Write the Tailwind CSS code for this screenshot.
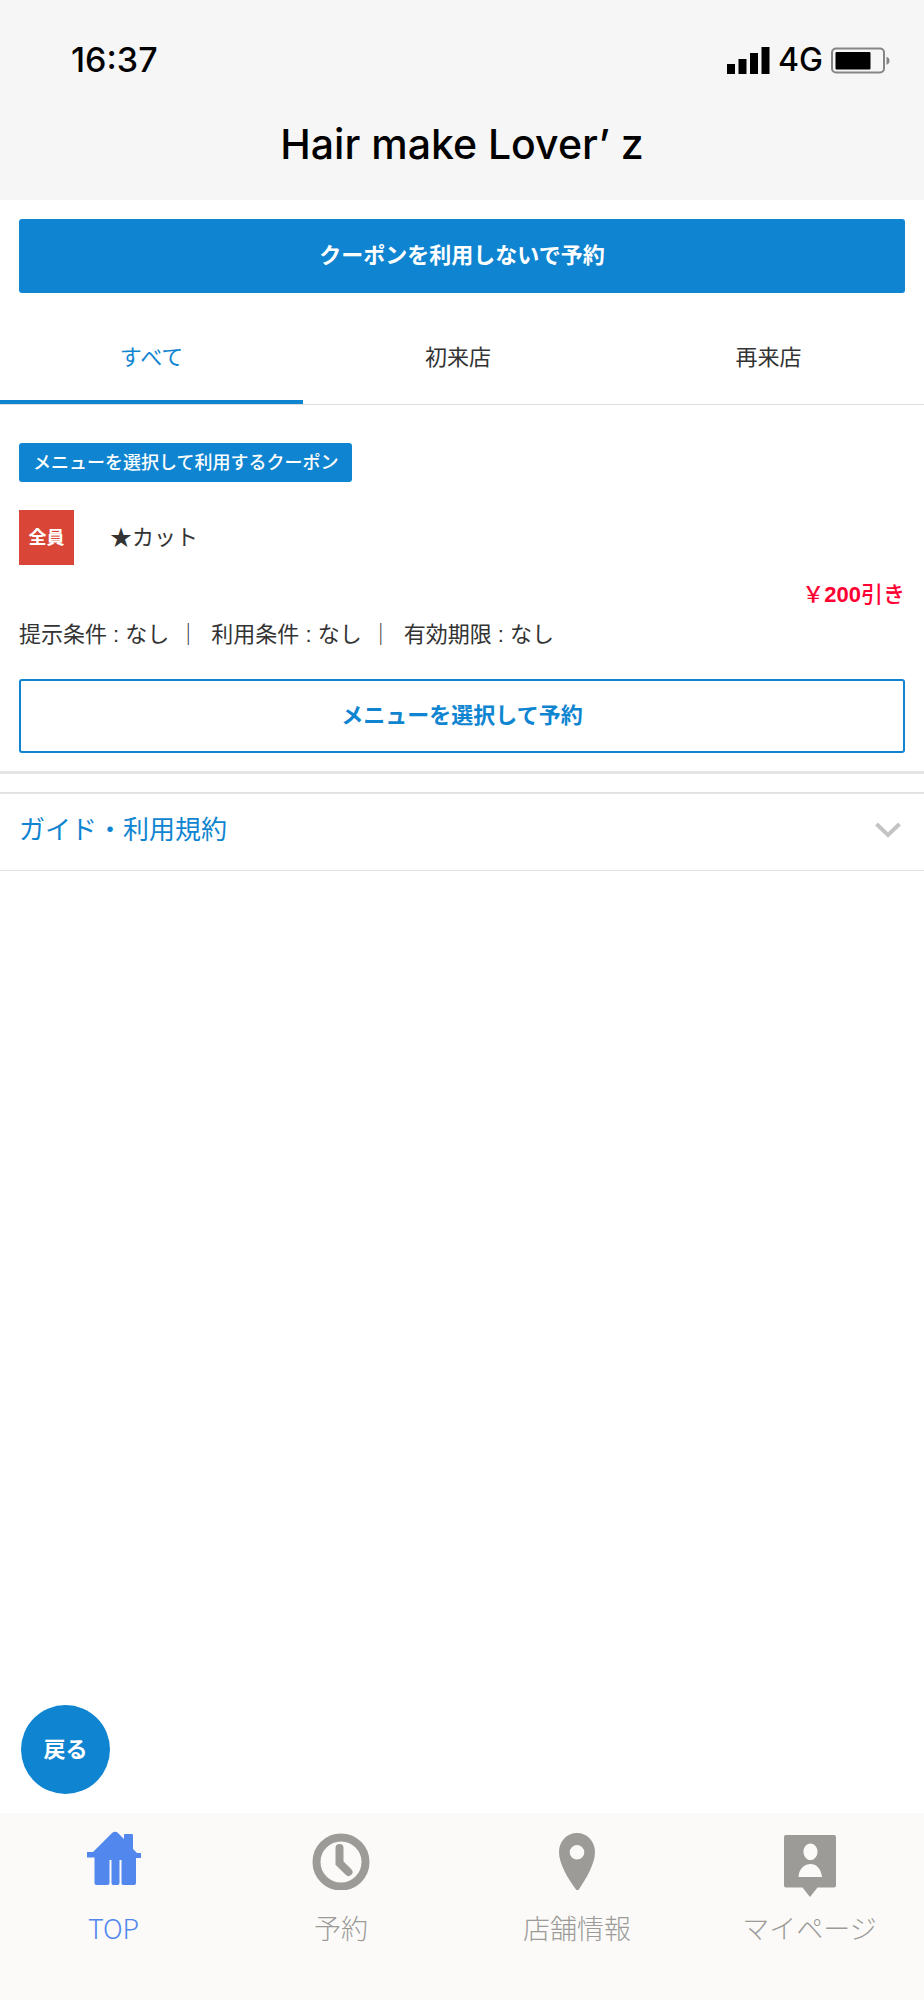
<!DOCTYPE html>
<html lang="ja">
<head>
<meta charset="utf-8">
<meta name="viewport" content="width=device-width, initial-scale=1">
<title>Hair make Lover’ z</title>
<script src="https://cdn.jsdelivr.net/npm/@tailwindcss/browser@4"></script>
</head>
<body class="flex min-h-screen flex-col bg-white font-['Liberation_Sans','Noto_Sans_CJK_JP',sans-serif] text-[22px] leading-8 text-[#333333]">

<header class="bg-[#f6f6f6] pb-8 text-black">
  <div class="flex items-center justify-between pt-10 pr-[33px] pl-[71px] font-['Inter',sans-serif] font-medium">
    <time class="text-[34px] leading-10">16:37</time>
    <div class="flex items-center gap-2">
      <svg class="h-[27px] w-[43px]" viewBox="0 0 43 27" fill="currentColor" aria-hidden="true">
        <path d="M0 17h8v10H0zM11.500 12h8v15h-8zM23 6h8v21h-8zM34.500 0h8v27h-8z"/>
      </svg>
      <span class="text-[32px] leading-10">4G</span>
      <svg class="h-[27px] w-[60px]" viewBox="0 0 60 27" aria-hidden="true">
        <rect x="1" y="1.500" width="52" height="24" rx="4" fill="none" stroke="#858585" stroke-width="2"/>
        <rect x="4.500" y="5" width="35" height="17.500" rx="1" fill="#000"/>
        <path d="M55.500 10c4 0 4 7.500 0 7.500z" fill="#858585"/>
      </svg>
    </div>
  </div>
  <h1 class="mt-10 text-center font-['Inter',sans-serif] text-[41px] leading-[48px] font-medium">Hair make Lover’ z</h1>
</header>

<main class="flex flex-1 flex-col">
  <div class="px-[19px] pt-[19px]">
    <button type="button" class="h-[74px] w-full rounded-[3px] bg-[#0f85d1] font-bold text-white">クーポンを利用しないで予約</button>
  </div>

  <div role="tablist" class="mt-[18px] grid h-[94px] grid-cols-[303fr_310fr_311fr] border-b border-[#dddddd]">
    <button type="button" role="tab" aria-selected="true" class="border-b-4 border-[#0f85d1] pt-1 text-[#0f85d1]">すべて</button>
    <button type="button" role="tab" aria-selected="false">初来店</button>
    <button type="button" role="tab" aria-selected="false">再来店</button>
  </div>

  <section class="border-b-3 border-[#e5e5e5] px-[19px] pt-[38px] pb-[18px]">
    <h2 class="inline-flex h-[39px] items-center rounded-[3px] bg-[#0f85d1] px-[14px] text-[18px] font-medium text-white">メニューを選択して利用するクーポン</h2>
    <div class="mt-7 flex h-[55px] items-center gap-9">
      <span class="flex size-[55px] items-center justify-center bg-[#d94536] text-[18px] font-bold text-white">全員</span>
      <h3>★カット</h3>
    </div>
    <p class="mt-[14px] text-right font-medium text-[#ff0033]">￥<b>200</b>引き</p>
    <p class="mt-2 flex">
      <span>提示条件 : なし</span><span class="mr-3 ml-2">｜</span>
      <span>利用条件 : なし</span><span class="mr-3 ml-2">｜</span>
      <span>有効期限 : なし</span>
    </p>
    <button type="button" class="mt-7 h-[74px] w-full rounded-[3px] border-2 border-[#0f85d1] font-bold text-[#0f85d1]">メニューを選択して予約</button>
  </section>

  <button type="button" class="mt-[18px] flex h-[79px] w-full items-center justify-between border-t-2 border-b border-[#e2e2e2] px-[19px] pb-1 text-[26px] text-[#0f85d1]">
    ガイド・利用規約
    <svg class="mr-1 h-[17px] w-[26px]" viewBox="0 0 26 17" fill="none" stroke="#c4c4c7" stroke-width="4" aria-hidden="true"><path d="M1.500 2 13 13 24.500 2"/></svg>
  </button>

  <div class="mt-auto pb-[19px] pl-[21px]">
    <button type="button" class="size-[89px] rounded-full bg-[#0f85d1] font-bold text-white">戻る</button>
  </div>
</main>

<nav class="grid h-[187px] grid-cols-[227fr_228fr_244fr_221fr] bg-[#fbfaf8] pr-1 font-['Noto_Sans_CJK_JP',sans-serif] text-[27px] leading-10 font-light text-[#9c9b98]">
  <a href="#" aria-current="page" class="flex flex-col items-center gap-[18px] pt-[17px] text-[#5287ee]">
    <svg class="h-[60px] w-[54px]" viewBox="0 0 54 60" fill="currentColor" aria-hidden="true">
      <path d="M25 3q3-2.500 6 0l6 6V5q0-1 1-1h7q1 0 1 1v14l4 4h4v5h-5v25q0 2-2 2H36q-1.500 0-1.500-2V30h-2v23q0 2-2 2H26q-1.500 0-1.500-2V30h-2v23q0 2-2 2H9.500q-2 0-2-2V27.500H0V22h6z"/>
    </svg>
    <span>TOP</span>
  </a>
  <a href="#" class="flex flex-col items-center gap-[18px] pt-[17px]">
    <svg class="h-[60px] w-[58px]" viewBox="0 0 58 60" fill="none" stroke="currentColor" stroke-width="8" aria-hidden="true">
      <circle cx="29" cy="32" r="24.500"/>
      <path d="M27.500 18v15l9 9" stroke-linecap="round"/>
    </svg>
    <span>予約</span>
  </a>
  <a href="#" class="flex flex-col items-center gap-[18px] pt-[17px]">
    <svg class="h-[60px] w-9" viewBox="0 0 36 60" fill="currentColor" fill-rule="evenodd" aria-hidden="true">
      <path d="M18 3c10 0 18 8 18 19 0 12-9 27-17.500 39.500C9 49 0 34 0 22 0 11 8 3 18 3zm0 12a7.300 7.300 0 1 0 0 14.600 7.300 7.300 0 0 0 0-14.600z"/>
    </svg>
    <span>店舗情報</span>
  </a>
  <a href="#" class="flex flex-col items-center gap-[18px] pt-[17px]">
    <svg class="h-[60px] w-[52px] overflow-visible" viewBox="0 0 52 60" fill="currentColor" fill-rule="evenodd" aria-hidden="true">
      <path d="M2 5h48q2 0 2 2v48.500q0 2-2 2H33.500L26 67l-7.500-9.500H2q-2 0-2-2V7q0-2 2-2zm24.500 8.500c-4 0-7 3.700-7 8.200s3 8.300 7 8.300 7-3.800 7-8.300-3-8.200-7-8.200zM14.500 47H38c-1-9-6-13-11.500-13s-11.500 4-12 13z"/>
    </svg>
    <span>マイページ</span>
  </a>
</nav>
</body>
</html>
